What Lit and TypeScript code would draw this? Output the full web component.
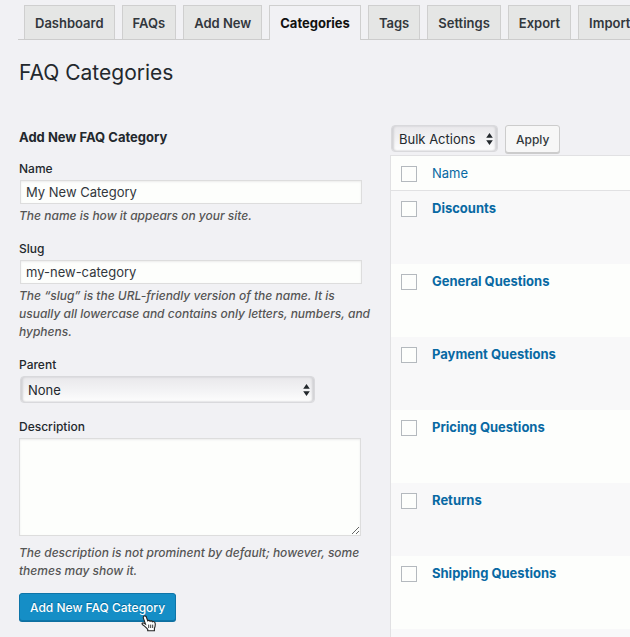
import { LitElement, html, css, svg } from "lit";
import { customElement, property, state } from "lit/decorators.js";
import { classMap } from "lit/directives/class-map.js";

const arrows = html`<svg class="arrows" width="7" height="12" viewBox="0 0 7 12" aria-hidden="true">
  ${svg`<path d="M3.5 0 L6.8 4.8 H0.2 Z M3.5 12 L6.8 7.2 H0.2 Z" fill="#23282d" />`}
</svg>`;

const selectStyles = css`
  .select {
    position: relative;
    display: inline-block;
  }
  .select select {
    appearance: none;
    display: block;
    box-sizing: border-box;
    width: 100%;
    height: 27px;
    margin: 0;
    padding: 0 18px 0 7px;
    border: 1px solid #d9d9dc;
    border-radius: 4px;
    background: linear-gradient(#e9e8eb, #f3f3f5 55%, #fdfdfd);
    box-shadow: inset 2px 0 2px #d2d2d5, inset -2px 0 2px #d2d2d5;
    color: #23282d;
    font: inherit;
    font-size: 13px;
  }
  .select .arrows {
    position: absolute;
    right: 5px;
    top: 8px;
    pointer-events: none;
  }
`;

@customElement("nav-tabs")
export class NavTabs extends LitElement {
  @property({ type: Array }) tabs: string[] = [];
  @property() active = "";

  static styles = css`
    :host {
      display: block;
    }
    .tabs {
      display: flex;
      gap: 7px;
      padding: 5px 0 0 6px;
      border-bottom: 1px solid #ccc;
    }
    .tab {
      flex: none;
      padding: 6px 10px 5px;
      border: 1px solid #cfcfcf;
      border-bottom: 0;
      background: #e5e6e5;
      color: #32373c;
      font-size: 13px;
      font-weight: 600;
      line-height: 22px;
      text-decoration: none;
    }
    .active {
      margin-bottom: -1px;
      padding-bottom: 6px;
      background: #f1f1f4;
      color: #111;
      font-weight: 700;
    }
  `;

  render() {
    return html`<nav class="tabs">
      ${this.tabs.map(
        (t) => html`<a href="#" class=${classMap({ tab: true, active: t === this.active })}>${t}</a>`
      )}
    </nav>`;
  }
}

@customElement("category-form")
export class CategoryForm extends LitElement {
  static styles = [
    selectStyles,
    css`
      :host {
        display: block;
      }
      form {
        display: flex;
        flex-direction: column;
        gap: 15px;
      }
      h2 {
        margin: 0 0 14px;
        font-size: 13px;
        font-weight: 700;
        line-height: 18px;
      }
      label {
        display: block;
        margin-bottom: 2px;
        font-weight: 500;
        line-height: 18px;
      }
      input,
      textarea {
        display: block;
        box-sizing: border-box;
        width: 95%;
        margin: 0;
        padding: 0 5px;
        border: 1px solid #ddd;
        background: #fdfefc;
        box-shadow: inset 0 1px 2px #ececec;
        color: #32373c;
        font: inherit;
        font-size: 13px;
      }
      input {
        height: 24px;
        margin: 0 1px;
      }
      textarea {
        height: 98px;
        resize: both;
      }
      .parent {
        width: 82%;
        margin: 0 1px;
      }
      p {
        margin: 3px 0 0;
        padding-right: 5px;
        color: #555;
        font-style: italic;
        font-weight: 500;
        line-height: 18px;
      }
      textarea + p {
        margin-top: 8px;
      }
      .submit {
        position: relative;
        align-self: flex-start;
        margin-top: -2px;
      }
      button {
        display: block;
        height: 28px;
        padding: 0 10px;
        border: 1px solid #0e75a8;
        border-radius: 3px;
        background: #158ec6;
        box-shadow: 0 1px 0 #0e6fa0;
        color: #fff;
        font: inherit;
        font-weight: 500;
        text-shadow: 0 -1px 1px #006799;
        cursor: pointer;
      }
      .pointer {
        position: absolute;
        left: 122px;
        top: 22px;
        pointer-events: none;
      }
    `,
  ];

  render() {
    return html`
      <h2>Add New FAQ Category</h2>
      <form @submit=${(e: Event) => e.preventDefault()}>
        <div>
          <label for="name">Name</label>
          <input id="name" type="text" value="My New Category" />
          <p>The name is how it appears on your site.</p>
        </div>
        <div>
          <label for="slug">Slug</label>
          <input id="slug" type="text" value="my-new-category" />
          <p>
            The “slug” is the URL-friendly version of the name. It is usually all lowercase and
            contains only letters, numbers, and hyphens.
          </p>
        </div>
        <div>
          <label for="parent">Parent</label>
          <div class="select parent">
            <select id="parent">
              <option>None</option>
            </select>
            ${arrows}
          </div>
        </div>
        <div>
          <label for="description">Description</label>
          <textarea id="description"></textarea>
          <p>The description is not prominent by default; however, some themes may show it.</p>
        </div>
        <div class="submit">
          <button type="submit">Add New FAQ Category</button>
          <svg class="pointer" width="16" height="17" viewBox="0 0 16 17" aria-hidden="true">
            <path
              d="M3.2 1 C4.6 0.4 5.3 1.6 5.7 3 L6.7 5.8 C7.6 5 8.7 5.3 9 6.2 C10 5.5 11.1 5.9 11.4 6.8 C12.9 6.1 14 7 14.2 8.6 C14.5 11 14 12 13.4 13.4 V15.8 H6.7 V14.2 C5.2 12.7 4 11 1.6 9.7 C0.2 8.7 1.6 7.3 3.2 8.3 L4.5 9.1 L2.4 3.1 C2.1 2.1 2.3 1.4 3.2 1 Z"
              fill="#fff"
              stroke="#222"
              stroke-width="1.1"
            />
            <path d="M7.7 9.6 V13 M9.7 9.6 V13 M11.7 9.6 V13" stroke="#222" stroke-width="0.9" />
          </svg>
        </div>
      </form>
    `;
  }
}

@customElement("category-list")
export class CategoryList extends LitElement {
  @state() private rows = [
    "Discounts",
    "General Questions",
    "Payment Questions",
    "Pricing Questions",
    "Returns",
    "Shipping Questions",
    "",
  ];

  static styles = [
    selectStyles,
    css`
      :host {
        display: block;
      }
      .actions {
        display: flex;
        gap: 7px;
        padding-left: 1px;
        margin-bottom: 2px;
      }
      .actions button {
        height: 28px;
        padding: 0 10px;
        border: 1px solid #ccc;
        border-radius: 3px;
        background: #f7f7f7;
        box-shadow: 0 1px 0 #ccc;
        color: #32373c;
        font: inherit;
        font-weight: 500;
      }
      .bulk {
        width: 107px;
      }
      table {
        width: 100%;
        border: 1px solid #e1e1e3;
        border-right: 0;
        border-bottom: 0;
        border-spacing: 0;
        background: #fdfefc;
      }
      th,
      td {
        padding: 8px 0 0;
        text-align: left;
        vertical-align: top;
        font-size: 13px;
        font-weight: 700;
        line-height: 18px;
      }
      thead th {
        height: 26px;
        border-bottom: 1px solid #e1e1e3;
        font-weight: 400;
      }
      tbody td {
        height: 65px;
      }
      tbody tr:nth-child(odd) {
        background: #f8f8f9;
      }
      .check {
        width: 41px;
      }
      input {
        appearance: none;
        display: block;
        box-sizing: border-box;
        width: 16px;
        height: 16px;
        margin: 2px 0 0 10px;
        border: 1px solid #b4b9be;
        background: #fdfefc;
      }
      a {
        color: #0869a3;
        text-decoration: none;
      }
    `,
  ];

  render() {
    return html`
      <div class="actions">
        <div class="select bulk">
          <select aria-label="Bulk actions">
            <option>Bulk Actions</option>
          </select>
          ${arrows}
        </div>
        <button type="button">Apply</button>
      </div>
      <table>
        <thead>
          <tr>
            <th class="check"><input type="checkbox" aria-label="Select all" /></th>
            <th><a href="#">Name</a></th>
          </tr>
        </thead>
        <tbody>
          ${this.rows.map(
            (r) => html`<tr>
              <td class="check">${r ? html`<input type="checkbox" aria-label=${r} />` : ""}</td>
              <td>${r ? html`<a href="#">${r}</a>` : ""}</td>
            </tr>`
          )}
        </tbody>
      </table>
    `;
  }
}

@customElement("app-root")
export class AppRoot extends LitElement {
  private tabs = ["Dashboard", "FAQs", "Add New", "Categories", "Tags", "Settings", "Export", "Import"];

  static styles = css`
    :host {
      display: block;
      box-sizing: border-box;
      height: 100vh;
      overflow: hidden;
      background: #f1f1f4;
      color: #23282d;
      font-family: Inter, Roboto, "Liberation Sans", sans-serif;
      font-size: 12px;
    }
    nav-tabs {
      margin-left: 18px;
    }
    h1 {
      margin: 18px 0 0 19px;
      font-size: 21px;
      font-weight: 400;
      line-height: 30px;
    }
    .columns {
      display: grid;
      grid-template-columns: minmax(0, 3fr) minmax(0, 2fr);
      gap: 11px;
      margin-left: 19px;
      padding-top: 37px;
    }
    category-form {
      padding-top: 3px;
    }
  `;

  render() {
    return html`
      <nav-tabs .tabs=${this.tabs} active="Categories"></nav-tabs>
      <main>
        <h1>FAQ Categories</h1>
        <div class="columns">
          <category-form></category-form>
          <category-list></category-list>
        </div>
      </main>
    `;
  }
}
